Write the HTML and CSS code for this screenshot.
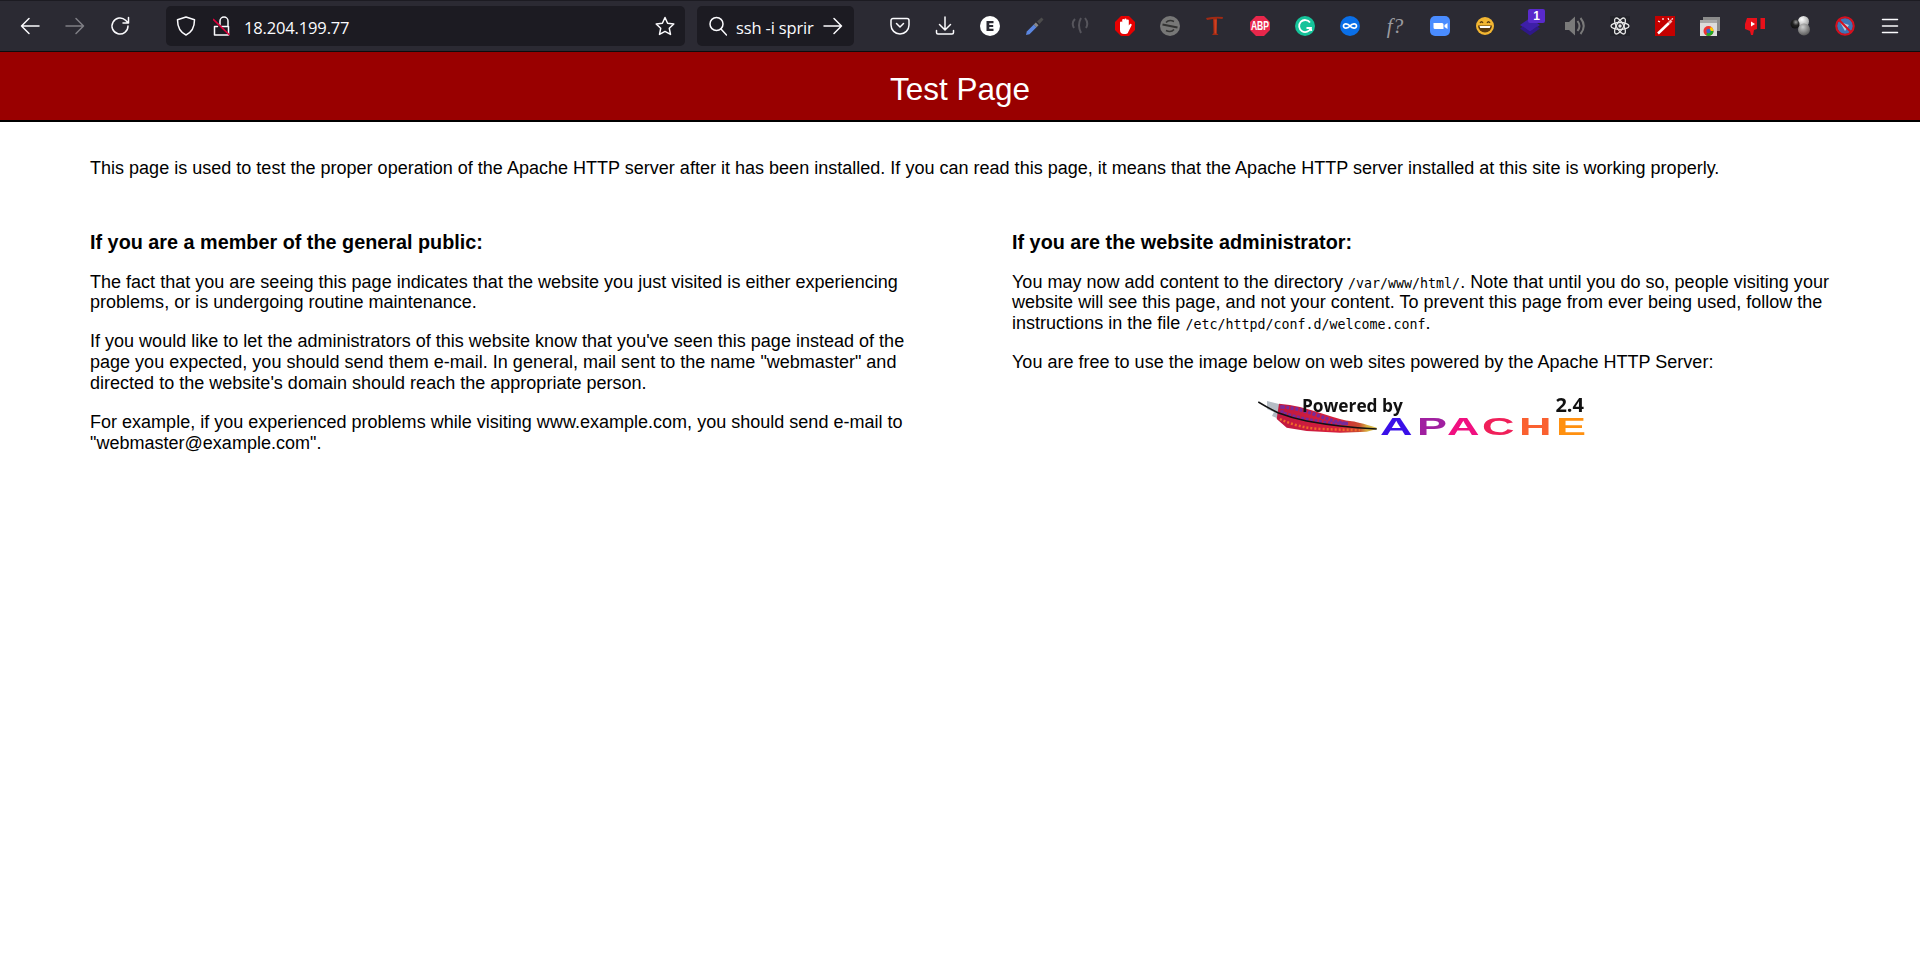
FILE: index.html
```html
<!DOCTYPE html>
<html lang="en">
<head>
<meta charset="utf-8">
<title>Test Page</title>
<link rel="stylesheet" href="styles.css">
</head>
<body>
<nav class="toolbar">
  <div class="nav-group">
    <svg class="ic" viewBox="0 0 20 20"><path d="M19 10H1.500M9 2.500L1.500 10 9 17.500" class="st"/></svg>
    <svg class="ic dim" viewBox="0 0 20 20"><path d="M1 10h17.500M11 2.500l7.500 7.500-7.500 7.500" class="st"/></svg>
    <svg class="ic" viewBox="0 0 20 20"><path d="M18 10a8 8 0 1 1-2.400-5.700L18 6.700M18.500 1.500v5.500H13" class="st"/></svg>
  </div>
  <div class="urlbar">
    <svg class="ic shield" viewBox="0 0 20 20"><path d="M10 1l8.500 2.800c0 7.500-2 12.200-8.500 15.200C3.500 16 1.500 11.300 1.500 3.800z" class="st"/></svg>
    <svg class="ic lock" viewBox="0 0 18 20"><path d="M8.500 10.500h7v8.500H1.500v-8.500H4.500M7 8.500V5a4 4 0 0 1 8 0v5.500" class="st"/><path d="M0 3l16.500 16" class="red"/></svg>
    <span class="url">18.204.199.77</span>
    <svg class="ic" viewBox="0 0 20 20"><path d="M10 1.500l2.600 5.700 6.200.8-4.500 4.300 1.200 6.100-5.500-3-5.500 3 1.200-6.100L1.200 8l6.200-.8z" class="st"/></svg>
  </div>
  <div class="searchbar">
    <svg class="ic glass" viewBox="0 0 18 20"><circle cx="7.500" cy="8" r="6.500" class="st"/><path d="M12 13l5.500 6" class="st"/></svg>
    <span class="query">ssh -i sprir</span>
    <svg class="ic" viewBox="0 0 20 20"><path d="M1 10h17.500M11 2.500l7.500 7.500-7.500 7.500" class="st"/></svg>
  </div>
  <div class="ext-group">
    <svg class="ic" viewBox="0 0 20 20"><path d="M3 2.500h14a2 2 0 0 1 2 2V9A9 9 0 0 1 1 9V4.500a2 2 0 0 1 2-2z" class="st"/><path d="M6.500 7.500L10 11l3.500-3.500" class="st"/></svg>
    <svg class="ic" viewBox="0 0 20 20"><path d="M10 1v12.500M4.500 8.500l5.500 5.500 5.500-5.500M1.500 14.500v2a1.500 1.500 0 0 0 1.500 1.500h14a1.500 1.500 0 0 0 1.500-1.500v-2" class="st"/></svg>
    <svg class="ic" viewBox="0 0 20 20"><circle cx="10" cy="10" r="10" fill="#fff"/><path d="M6.500 5h7v2.300H9.300v1.600h3.900v2.200H9.300v1.600h4.200V15h-7z" fill="#2b2a33"/></svg>
    <svg class="ic" viewBox="0 0 20 20"><path d="M1 19l.8-3.500 7-7 2.700 2.700-7 7z" fill="#5b86e0"/><path d="M8.800 8.500l2.700 2.700 2-2-2.700-2.700z" fill="#8a8a8a"/><path d="M12 5.500l2.500 2.500 4-4.500-2-2z" fill="#4c4c4c"/></svg>
    <svg class="ic" viewBox="0 0 20 20"><path d="M5 3Q1 7 4 12M11 2Q7 9 11 17M15 2q4 5 1 10" fill="none" stroke="#56555c" stroke-width="2"/></svg>
    <svg class="ic" viewBox="0 0 20 20"><path d="M6 0h8l6 6v8l-6 6H6l-6-6V6z" fill="#e60000"/><path d="M5 11V6.500a1 1 0 0 1 2.200 0V4a1 1 0 0 1 2.200 0V3.500a1 1 0 0 1 2.200 0V4.500a1 1 0 0 1 2.200 0V9.500l1-1.200a1 1 0 0 1 1.700 1.200L13.500 15.500a3 3 0 0 1-2.500 2.500H9q-4 0-4-4z" fill="#fff"/></svg>
    <svg class="ic" viewBox="0 0 20 20"><circle cx="10" cy="10" r="10" fill="#777"/><path d="M14 5.500Q9 3 6 6.500M6 14.500q5 2.500 8-1" fill="none" stroke="#333" stroke-width="1.500"/><path d="M2.500 8.500l15 3" stroke="#333" stroke-width="2"/></svg>
    <svg class="ic" viewBox="0 0 20 20"><path d="M1 2q9-2 17-1l-.5 2L12 2.500l-.5 14.500 2 2H7l1.500-2L8 3l-6 1z" fill="#a02a14"/><path d="M9.300 3.500h2.400l-.3 14H9.600z" fill="#d04020"/></svg>
    <svg class="ic" viewBox="0 0 20 20"><path d="M6 0h8l6 6v8l-6 6H6l-6-6V6z" fill="#e8274b"/><text x="13.890" y="14.300" class="abp" transform="scale(.72 1)">ABP</text></svg>
    <svg class="ic" viewBox="0 0 20 20"><circle cx="10" cy="10" r="10" fill="#15c39a"/><path d="M15 6.500a6 6 0 1 0 .8 5.500h-4.300M15.800 12l.6 3" fill="none" stroke="#fff" stroke-width="1.800"/></svg>
    <svg class="ic" viewBox="0 0 20 20"><circle cx="10" cy="10" r="10" fill="#0a6fe8"/><path d="M10 10C8 7.500 3.500 7 3.500 10s4.500 2.500 6.500 0 6.500-3 6.500 0-4.500 2.500-6.500 0z" fill="none" stroke="#fff" stroke-width="1.700"/></svg>
    <span class="fq">f?</span>
    <svg class="ic" viewBox="0 0 20 20"><rect width="20" height="20" rx="5" fill="#4a8cff"/><path d="M3.500 7h8.500a1.500 1.500 0 0 1 1.500 1.500V13H5a1.500 1.500 0 0 1-1.500-1.500zM14.500 9l3-2v6l-3-2z" fill="#fff"/></svg>
    <svg class="ic" viewBox="0 0 20 20"><circle cx="10" cy="10" r="9" fill="#f2b632"/><path d="M3 9.500h14a7 7 0 0 1-14 0z" fill="#5a3b10"/><path d="M4.500 10h11l-.7 2H5.200z" fill="#fff"/><path d="M5 7q1.500-2.500 3 0M12 7q1.500-2.500 3 0" fill="none" stroke="#5a3b10" stroke-width="1.300"/></svg>
    <span class="stack">
      <svg class="ic" viewBox="0 0 20 20"><path d="M10 2l10 7-10 7L0 9z" fill="#3d1fa8"/><path d="M0 12.500l3-2 7 5 7-5 3 2-10 7z" fill="#2f1888"/></svg>
      <b class="badge">1</b>
    </span>
    <svg class="ic" viewBox="0 0 20 20"><path d="M0 6h4l6-5.500v19L4 14H0z" fill="#7a7a7a"/><path d="M12.500 5q4 5 0 10M15.500 2q6.500 8 0 16" fill="none" stroke="#7a7a7a" stroke-width="2"/></svg>
    <svg class="ic" viewBox="0 0 20 20"><rect width="20" height="20" fill="#23232a"/><g fill="none" stroke="#e8e8e8" stroke-width="1.300"><ellipse cx="10" cy="10" rx="9" ry="3.500"/><ellipse cx="10" cy="10" rx="9" ry="3.500" transform="rotate(60 10 10)"/><ellipse cx="10" cy="10" rx="9" ry="3.500" transform="rotate(120 10 10)"/></g><circle cx="10" cy="10" r="1.700" fill="#e8e8e8"/></svg>
    <svg class="ic" viewBox="0 0 20 20"><rect width="20" height="20" fill="#c40000"/><path d="M3 17.500L14 7" stroke="#fff" stroke-width="2.600"/><path d="M14 7l2.500-2.500" stroke="#f4b5b5" stroke-width="2.600"/><path d="M13 2l.8 2M18 2.500l-1.500 1M3 5l2 1M8 2v2" stroke="#fff" stroke-width="1.200"/></svg>
    <svg class="ic" viewBox="0 0 20 20"><rect x="3" y="1" width="17" height="14" fill="#8b8b8b"/><rect x="0" y="4" width="17" height="16" fill="#dcdcdc"/><rect x="0" y="4" width="17" height="3" fill="#a8a8a8"/><circle cx="8.500" cy="15" r="5" fill="#e33"/><path d="M8.500 15h5A5 5 0 0 1 6 19.300z" fill="#2a2"/><path d="M8.500 15h5a5 5 0 0 0-2.500-4.300z" fill="#fc0"/><circle cx="8.500" cy="15" r="2.200" fill="#36c"/></svg>
    <svg class="ic" viewBox="0 0 20 20"><path d="M2 2h10v11l-3 1-1 5-2 0-1-4-5-2v-5z" fill="#e8101a"/><path d="M6 5.500v5l4-2.500z" fill="#fff"/><rect x="15.500" y="2" width="4.500" height="11" fill="#e8101a"/></svg>
    <svg class="ic" viewBox="0 0 20 20"><defs><radialGradient id="bw" cx=".35" cy=".3" r=".8"><stop offset="0" stop-color="#fff"/><stop offset="1" stop-color="#999"/></radialGradient><radialGradient id="bd" cx=".6" cy=".3" r=".8"><stop offset="0" stop-color="#999"/><stop offset=".45" stop-color="#222"/><stop offset="1" stop-color="#0c0c0c"/></radialGradient><radialGradient id="bg" cx=".4" cy=".3" r=".8"><stop offset="0" stop-color="#ccc"/><stop offset="1" stop-color="#4c4c4c"/></radialGradient></defs><circle cx="13.500" cy="5.500" r="5.500" fill="url(#bw)"/><circle cx="14" cy="13.500" r="6" fill="url(#bg)"/><circle cx="5" cy="8" r="4.500" fill="url(#bd)"/></svg>
    <svg class="ic" viewBox="0 0 20 20"><circle cx="10" cy="10" r="8" fill="#3f74b5"/><path d="M5 6l9 3-4 6z" fill="#bcd"/><circle cx="10" cy="10" r="8.800" fill="none" stroke="#d80f1d" stroke-width="2"/><path d="M3.800 3.800l12.400 12.400" stroke="#d80f1d" stroke-width="2"/></svg>
    <svg class="ic" viewBox="0 0 20 20"><path d="M2.500 3.500h15M2.500 10h15M2.500 16.500h15" class="st"/></svg>
  </div>
</nav>
<header class="banner"><h1 class="title">Test Page</h1></header>
<main class="content">
  <p class="intro">This page is used to test the proper operation of the Apache HTTP server after it has been installed. If you can read this page, it means that the Apache HTTP server installed at this site is working properly.</p>
  <div class="columns">
    <section class="column">
      <h2 class="heading">If you are a member of the general public:</h2>
      <p class="para">The fact that you are seeing this page indicates that the website you just visited is either experiencing problems, or is undergoing routine maintenance.</p>
      <p class="para">If you would like to let the administrators of this website know that you've seen this page instead of the page you expected, you should send them e-mail. In general, mail sent to the name "webmaster" and directed to the website's domain should reach the appropriate person.</p>
      <p class="para">For example, if you experienced problems while visiting www.example.com, you should send e-mail to "webmaster@example.com".</p>
    </section>
    <section class="column">
      <h2 class="heading">If you are the website administrator:</h2>
      <p class="para">You may now add content to the directory <code class="mono">/var/www/html/</code>. Note that until you do so, people visiting your website will see this page, and not your content. To prevent this page from ever being used, follow the instructions in the file <code class="mono">/etc/httpd/conf.d/welcome.conf</code>.</p>
      <p class="para">You are free to use the image below on web sites powered by the Apache HTTP Server:</p>
      <div class="logo-row">
        <div class="logo">
          <svg class="feather" viewBox="0 0 120 36">
            <defs><linearGradient id="fg" x1="0" y1="0" x2="1" y2="0"><stop offset="0" stop-color="#c01840"/><stop offset=".6" stop-color="#d8203c"/><stop offset=".82" stop-color="#c84a30"/><stop offset=".9" stop-color="#d8b040"/><stop offset="1" stop-color="#d8c050"/></linearGradient></defs>
            <path d="M9 0l12 3v15l-7-3 2-4-7-3z" fill="#b5bcc4"/>
            <path d="M21 2.700Q32 3.500 42 6T68.700 14 92 20 118.700 26.700L119 28 108.700 30.700 82 31.700 48.700 30 28.700 26.700 18.700 18z" fill="url(#fg)"/>
            <path d="M24 6Q40 7 60 14.500T90 22.500L70 22 46 18 24 12z" fill="none" stroke="#7a2a98" stroke-width="3.500" stroke-dasharray="3 1.500"/>
            <path d="M22 18Q40 27 64 28T102 29" fill="none" stroke="#ef6a2a" stroke-width="2.500" stroke-dasharray="2 2"/>
            <path d="M0.300 1Q10 7 20 11.700 34 17 48.700 20 65 23 82 25T118.700 28" fill="none" stroke="#111" stroke-width="1.500"/>
          </svg>
          <span class="powered">Powered by</span>
          <span class="version">2.4</span>
          <span class="apache"><i class="ltr c1">A</i><i class="ltr c2">P</i><i class="ltr c3">A</i><i class="ltr c4">C</i><i class="ltr c5">H</i><i class="ltr c6">E</i></span>
        </div>
      </div>
    </section>
  </div>
</main>
</body>
</html>
```
FILE: styles.css
```css
* { box-sizing: border-box; }
html, body { margin: 0; padding: 0; background: #fff; }
body { font-family: "Liberation Sans", Arial, sans-serif; color: #000; font-size: 18px; line-height: 20.700px; letter-spacing: .012px; height: 976px; overflow: hidden; }

.toolbar { height: 52px; background: #2b2a33; border-top: 1px solid #1c1b22; border-bottom: 1px solid #0c0c0d; display: flex; align-items: center; padding: 0 0 0 20px; letter-spacing: 0; }
.st { fill: none; stroke: #fbfbfe; stroke-width: 1.500; stroke-linecap: round; stroke-linejoin: round; }
.red { stroke: #e0003c; stroke-width: 1.700; fill: none; }
.ic { width: 20px; height: 20px; flex: none; display: block; }
.dim { opacity: .4; }
.nav-group { display: flex; gap: 25px; width: 146px; flex: none; }
.urlbar { width: 519px; height: 40px; background: #1c1b22; border-radius: 5px; display: flex; align-items: center; padding: 0 10px 0 10px; flex: none; }
.shield { margin-right: 17px; }
.lock { width: 18px; margin-right: 13px; }
.url, .query { font-family: "Open Sans", sans-serif; font-size: 16.500px; letter-spacing: -.15px; color: #fbfbfe; padding-top: 4px; }
.url { flex: 1; }
.searchbar { width: 157px; height: 40px; margin-left: 12px; background: #1c1b22; border-radius: 5px; display: flex; align-items: center; padding: 0 11px 0 12px; flex: none; }
.glass { width: 18px; margin-right: 9px; }
.query { flex: 1; white-space: nowrap; }
.ext-group { display: flex; align-items: center; flex: 1; gap: 25px; margin-left: 36px; }
.fq { width: 20px; height: 20px; font-family: "Liberation Serif", serif; font-style: italic; font-size: 21px; line-height: 20px; color: #9a9a9f; text-align: center; white-space: nowrap; flex: none; }
.abp { font: bold 12px "Liberation Sans", sans-serif; fill: #fff; text-anchor: middle; }
.stack { position: relative; width: 20px; height: 20px; flex: none; }
.badge { position: absolute; left: 8px; top: -7px; width: 17px; height: 14px; border-radius: 2px; background: #592acb; color: #fff; font: bold 12px/14px "Liberation Sans", sans-serif; text-align: center; }

.banner { height: 70px; padding-top: 5px; background: #900; border-bottom: 2px solid #000; display: flex; align-items: center; justify-content: center; }
.title { margin: 0; font-size: 31.500px; font-weight: 400; line-height: 36px; color: #fff; }

.content { padding: 36px 90px 0; }
.intro { margin: 0; }
.columns { display: flex; gap: 104px; margin-top: 51px; }
.column { flex: 0 0 818px; }
.heading { margin: 0 0 18px; font-size: 19.800px; line-height: 24px; font-weight: 700; }
.para { margin: 0 0 18.300px; }
.mono { font-family: "DejaVu Sans Mono", monospace; font-size: 13.300px; line-height: 0; letter-spacing: 0; }
.logo-row { display: flex; justify-content: center; margin-top: 22px; }
.logo { position: relative; width: 326px; height: 46px; filter: blur(.35px); }
.feather { position: absolute; left: 0; top: 6px; width: 120px; height: 36px; }
.powered, .version { position: absolute; color: #111; white-space: nowrap; font-family: "Open Sans", sans-serif; font-weight: 700; line-height: 20px; }
.powered { left: 44px; top: 1px; font-size: 17.300px; letter-spacing: 0; }
.version { right: 0; top: 0; font-size: 20px; letter-spacing: 0; }
.apache { position: absolute; left: 122px; top: 23px; display: flex; font: 700 23.700px/18px "Liberation Sans", sans-serif; }
.ltr { font-style: normal; display: block; transform: scaleX(1.900); transform-origin: left center; }
.c1 { color: #3a10e8; width: 37px; } .c2 { color: #a020a0; width: 30px; } .c3 { color: #f01080; width: 35px; } .c4 { color: #f0205a; width: 37px; } .c5 { color: #fa6030; width: 37px; } .c6 { color: #ff9010; width: 26px; }
```
